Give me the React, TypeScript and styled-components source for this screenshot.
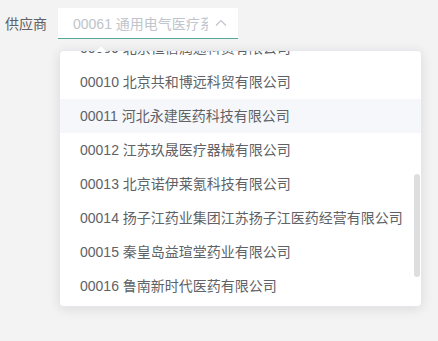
import React, { useLayoutEffect, useRef } from "react";
import styled, { createGlobalStyle } from "styled-components";

const GlobalStyle = createGlobalStyle`
  html, body {
    margin: 0;
    padding: 0;
    background: #f3f3f3;
    font-family: "Liberation Sans", "Noto Sans CJK SC", sans-serif;
  }
`;

const suppliers: string[] = [
  "00001 北京医疗器械有限公司",
  "00002 天津瑞康医药有限公司",
  "00003 上海华源医疗科技有限公司",
  "00004 广州康泰医药有限公司",
  "00005 深圳迈瑞生物医疗电子股份有限公司",
  "00006 杭州华东医药有限公司",
  "00007 南京医药股份有限公司",
  "00008 重庆医药集团有限公司",
  "00009 北京恒信润通科贸有限公司",
  "00010 北京共和博远科贸有限公司",
  "00011 河北永建医药科技有限公司",
  "00012 江苏玖晟医疗器械有限公司",
  "00013 北京诺伊莱氪科技有限公司",
  "00014 扬子江药业集团江苏扬子江医药经营有限公司",
  "00015 秦皇岛益瑄堂药业有限公司",
  "00016 鲁南新时代医药有限公司",
  "00017 山东瑞康医药股份有限公司",
  "00018 华润河北医药有限公司",
];

const App = () => {
  const wrapRef = useRef<HTMLDivElement>(null);

  useLayoutEffect(() => {
    if (wrapRef.current) wrapRef.current.scrollTop = 298;
  }, []);

  return (
    <>
      <GlobalStyle />
      <Page>
        <FormItem>
          <Label>供应商</Label>
          <SelectBox>
            <Input>00061 通用电气医疗系统贸易发展（上海）有限公司</Input>
            <Chevron width="12" height="8" viewBox="0 0 12 8">
              <polyline
                points="1,6.5 6,1.5 11,6.5"
                fill="none"
                stroke="#c0c4cc"
                strokeWidth="1.2"
              />
            </Chevron>
            <Dropdown>
              <Arrow />
              <ScrollWrap ref={wrapRef}>
                <List>
                  {suppliers.map((name) => (
                    <Item key={name} hover={name.startsWith("00011")}>
                      {name}
                    </Item>
                  ))}
                </List>
              </ScrollWrap>
              <Thumb />
            </Dropdown>
          </SelectBox>
        </FormItem>
      </Page>
    </>
  );
};

export default App;

const Page = styled.div`
  width: 438px;
  height: 341px;
  padding: 8px 5px;
  box-sizing: border-box;
`;

const FormItem = styled.div`
  display: flex;
  align-items: center;
  gap: 11px;
`;

const Label = styled.span`
  font-size: 14px;
  color: #606266;
  line-height: 30px;
`;

const SelectBox = styled.div`
  position: relative;
  display: flex;
  align-items: center;
  width: 180px;
  height: 31px;
  background: #fff;
  border-bottom: 1px solid #5aa89a;
  box-sizing: border-box;
`;

const Input = styled.div`
  width: 135px;
  flex: none;
  padding-left: 15px;
  font-size: 14px;
  color: #c0c4cc;
  white-space: nowrap;
  overflow: hidden;
`;

const Chevron = styled.svg`
  flex: none;
  margin-left: 7px;
`;

const Dropdown = styled.div`
  position: absolute;
  left: 1px;
  top: 42px;
  width: 363px;
  background: #fff;
  border: 1px solid #e4e7ed;
  border-radius: 4px;
  box-shadow: 0 2px 12px 0 rgba(0, 0, 0, 0.1);
  box-sizing: border-box;
  z-index: 10;
`;

const Arrow = styled.div`
  position: absolute;
  top: -6px;
  left: 35px;
  width: 0;
  height: 0;
  border-left: 6px solid transparent;
  border-right: 6px solid transparent;
  border-bottom: 6px solid #e4e7ed;

  &::after {
    content: "";
    position: absolute;
    top: 1px;
    left: -6px;
    border-left: 6px solid transparent;
    border-right: 6px solid transparent;
    border-bottom: 6px solid #fff;
  }
`;

const ScrollWrap = styled.div`
  height: 255px;
  overflow-y: scroll;
  scrollbar-width: none;

  &::-webkit-scrollbar {
    display: none;
  }
`;

const List = styled.ul`
  list-style: none;
  margin: 0;
  padding: 6px 0;
`;

const Item = styled.li<{ hover?: boolean }>`
  height: 34px;
  line-height: 34px;
  padding: 0 20px;
  font-size: 14px;
  color: #606266;
  white-space: nowrap;
  background: ${({ hover }) => (hover ? "#f5f7fa" : "transparent")};
`;

const Thumb = styled.div`
  position: absolute;
  right: 1px;
  top: 123px;
  width: 6px;
  height: 103px;
  border-radius: 3px;
  background: #dddee0;
`;
